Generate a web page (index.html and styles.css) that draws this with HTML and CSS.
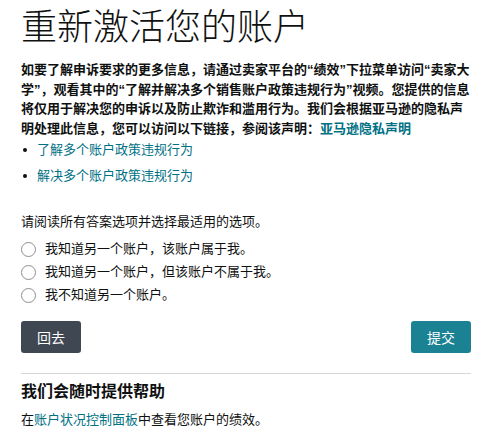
FILE: index.html
```html
<!DOCTYPE html>
<html lang="zh-CN">
<head>
<meta charset="utf-8">
<link rel="stylesheet" href="styles.css">
</head>
<body>
<div class="page">
  <h1 class="title">重新激活您的账户</h1>
  <p class="intro">如要了解申诉要求的更多信息，请通过卖家平台的“绩效”下拉菜单访问“卖家大学”，观看其中的“了解并解决多个销售账户政策违规行为”视频。您提供的信息将仅用于解决您的申诉以及防止欺诈和滥用行为。我们会根据亚马逊的隐私声明处理此信息，您可以访问以下链接，参阅该声明：<a class="link" href="#">亚马逊隐私声明</a></p>
  <ul class="links">
    <li><a class="link" href="#">了解多个账户政策违规行为</a></li>
    <li><a class="link" href="#">解决多个账户政策违规行为</a></li>
  </ul>
  <p class="prompt">请阅读所有答案选项并选择最适用的选项。</p>
  <div class="options">
    <label class="option"><span class="radio"></span>我知道另一个账户，该账户属于我。</label>
    <label class="option"><span class="radio"></span>我知道另一个账户，但该账户不属于我。</label>
    <label class="option"><span class="radio"></span>我不知道另一个账户。</label>
  </div>
  <div class="actions">
    <button class="btn btn-back">回去</button>
    <button class="btn btn-submit">提交</button>
  </div>
  <hr class="divider">
  <h2 class="help-title">我们会随时提供帮助</h2>
  <p class="help-text">在<a class="link" href="#">账户状况控制面板</a>中查看您账户的绩效。</p>
</div>
</body>
</html>
```
FILE: styles.css
```css
html, body {
  margin: 0;
  padding: 0;
  background: #ffffff;
}
body {
  font-family: "Liberation Sans", "Noto Sans CJK SC", sans-serif;
  color: #0f1111;
  font-size: 13px;
}
.page {
  width: 450px;
  padding: 0 0 0 21px;
}
.title {
  margin: 0;
  padding-top: 6px;
  font-size: 36px;
  line-height: 44px;
  font-weight: 300;
  color: #0f1111;
}
.intro {
  margin: 10px 0 0;
  font-size: 13px;
  line-height: 19.7px;
  font-weight: 700;
}
.link {
  color: #007185;
  text-decoration: none;
}
.links {
  margin: 0;
  padding: 1px 0 0 16px;
  list-style: none;
}
.links li {
  position: relative;
  line-height: 19px;
  margin-bottom: 7px;
}
.links li::before {
  content: "";
  position: absolute;
  left: -14px;
  top: 8px;
  width: 4px;
  height: 4px;
  border-radius: 50%;
  background: #0f1111;
}
.prompt {
  margin: 27px 0 0;
  line-height: 20px;
}
.options {
  margin-top: 6px;
  display: flex;
  flex-direction: column;
}
.option {
  display: flex;
  align-items: center;
  height: 23px;
  line-height: 20px;
}
.radio {
  width: 13px;
  height: 13px;
  border: 1px solid #8d9090;
  border-radius: 50%;
  margin-right: 9px;
  background: #fff;
  flex: none;
}
.actions {
  margin-top: 14px;
  display: flex;
  justify-content: space-between;
}
.btn {
  width: 60px;
  height: 32px;
  border: none;
  border-radius: 3px;
  color: #ffffff;
  font-family: "Liberation Sans", "Noto Sans CJK SC", sans-serif;
  font-size: 14px;
  padding: 0;
}
.btn-back {
  background: #3f4753;
}
.btn-submit {
  background: #1b8294;
}
.divider {
  margin: 20px 0 0;
  border: none;
  border-top: 1px solid #d5d9d9;
}
.help-title {
  margin: 7px 0 0;
  font-size: 16px;
  line-height: 22px;
  font-weight: 700;
}
.help-text {
  margin: 7px 0 0;
  line-height: 20px;
}
```
